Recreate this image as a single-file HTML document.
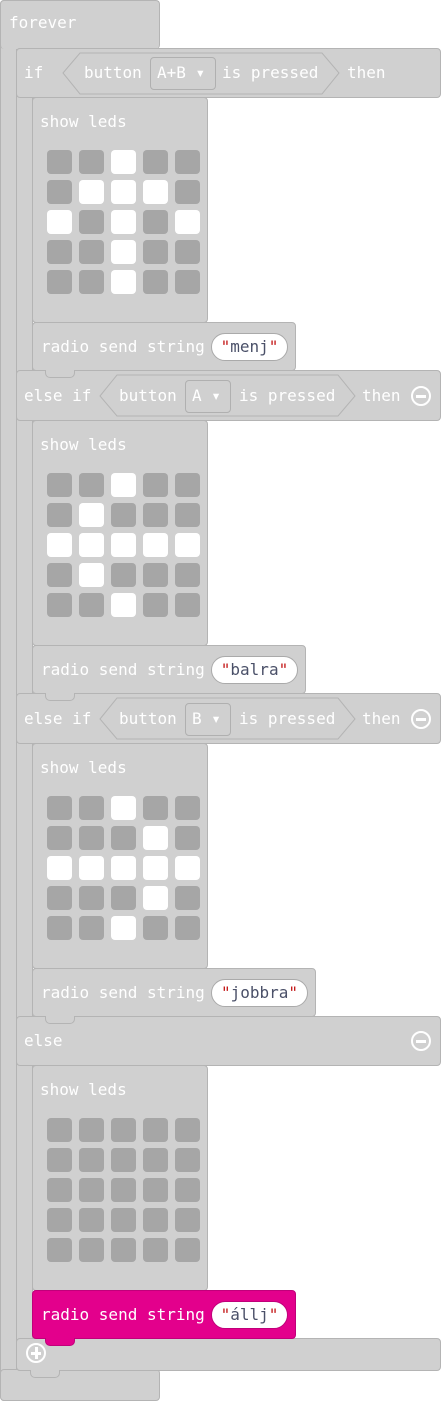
<!DOCTYPE html>
<html><head><meta charset="utf-8"><style>
*{margin:0;padding:0}
body{width:441px;height:1402px;background:#fff;position:relative;overflow:hidden;font-family:"DejaVu Sans Mono","Liberation Mono",monospace;}
.b{position:absolute;background:#d0d0d0;border:1px solid #b4b4b4;border-radius:4px;box-sizing:border-box}
.t{position:absolute;color:#fff;font-size:16px;line-height:20px;white-space:nowrap;font-weight:normal}
.tab{position:absolute;width:30px;height:8px;background:#d0d0d0;border:1px solid #b4b4b4;border-top:none;border-radius:0 0 5px 5px;box-sizing:border-box}
.g{position:absolute;left:47px;display:grid;grid-template-columns:repeat(5,25px);grid-template-rows:repeat(5,24px);column-gap:7px;row-gap:6px}
.g i{display:block;background:#a6a6a6;border-radius:4px}
.g i.w{background:#fff}
.pill{position:absolute;left:211px;height:28px;background:#fff;border:1px solid #aaa;border-radius:14px;box-sizing:border-box;color:#4a5068;font-size:16px;line-height:26px;text-align:center}
.pill b{color:#c41a1a;font-weight:normal}
.dd{position:absolute;border:1px solid #b0b0b0;border-radius:4px;box-sizing:border-box;height:33px}
.circ{position:absolute;width:20px;height:20px;border:2px solid #fff;border-radius:50%;box-sizing:border-box}
.circ:after{content:"";position:absolute;left:3px;top:6.5px;width:10px;height:3px;background:#fff}
</style></head><body>
<div class="b" style="left:0;top:0;width:17px;height:1401px"></div>
<div class="b" style="left:0;top:0;width:160px;height:49px;border-bottom:none"></div>
<div class="b" style="left:0;top:1369px;width:160px;height:32px"></div>
<div class="t" style="left:9px;top:13px">forever</div>
<div class="b" style="left:16px;top:48px;width:17px;height:1323px"></div>
<div class="b" style="left:16px;top:1338px;width:425px;height:33px"></div>
<div class="tab" style="left:30px;top:1370px"></div>
<div class="circ" style="left:26px;top:1343px"></div>
<div style="position:absolute;left:34.5px;top:1347px;width:3px;height:12px;background:#fff"></div>

<div class="b" style="left:16px;top:48px;width:425px;height:50px"></div>
<div class="b" style="left:16px;top:370px;width:425px;height:51px"></div>
<div class="b" style="left:16px;top:693px;width:425px;height:51px"></div>
<div class="b" style="left:16px;top:1016px;width:425px;height:50px"></div>

<svg style="position:absolute;left:0;top:0" width="441" height="1402">
<polygon points="63,73 80,53 322,53 339,73 322,94 80,94" fill="#d0d0d0" stroke="#b4b4b4"/>
<polygon points="100,396 117,375 338,375 355,396 338,416 117,416" fill="#d0d0d0" stroke="#b4b4b4"/>
<polygon points="100,719 117,698 338,698 355,719 338,739 117,739" fill="#d0d0d0" stroke="#b4b4b4"/>
</svg>

<div class="t" style="left:24px;top:63px">if</div>
<div class="t" style="left:84px;top:63px">button</div>
<div class="dd" style="left:150px;top:57px;width:66px"></div>
<div class="t" style="left:157px;top:63px">A+B ▾</div>
<div class="t" style="left:222px;top:63px">is pressed</div>
<div class="t" style="left:347px;top:63px">then</div>

<div class="t" style="left:24px;top:386px">else if</div>
<div class="t" style="left:119px;top:386px">button</div>
<div class="dd" style="left:185px;top:380px;width:46px"></div>
<div class="t" style="left:192px;top:386px">A ▾</div>
<div class="t" style="left:239px;top:386px">is pressed</div>
<div class="t" style="left:362px;top:386px">then</div>
<div class="circ" style="left:411px;top:386px"></div>

<div class="t" style="left:24px;top:709px">else if</div>
<div class="t" style="left:119px;top:709px">button</div>
<div class="dd" style="left:185px;top:703px;width:46px"></div>
<div class="t" style="left:192px;top:709px">B ▾</div>
<div class="t" style="left:239px;top:709px">is pressed</div>
<div class="t" style="left:362px;top:709px">then</div>
<div class="circ" style="left:411px;top:709px"></div>

<div class="t" style="left:24px;top:1031px">else</div>
<div class="circ" style="left:411px;top:1031px"></div>

<div class="b" style="left:32px;top:97px;width:176px;height:226px"></div>
<div class="t" style="left:40px;top:112px">show leds</div>
<div class="g" style="top:150px">
<i></i><i></i><i class="w"></i><i></i><i></i>
<i></i><i class="w"></i><i class="w"></i><i class="w"></i><i></i>
<i class="w"></i><i></i><i class="w"></i><i></i><i class="w"></i>
<i></i><i></i><i class="w"></i><i></i><i></i>
<i></i><i></i><i class="w"></i><i></i><i></i>
</div>
<div class="b" style="left:32px;top:322px;width:264px;height:49px"></div>
<div class="tab" style="left:45px;top:370px"></div>
<div class="t" style="left:41px;top:337px">radio send string</div>
<div class="pill" style="top:333px;width:77px"><b>"</b>menj<b>"</b></div>

<div class="b" style="left:32px;top:420px;width:176px;height:226px"></div>
<div class="t" style="left:40px;top:435px">show leds</div>
<div class="g" style="top:473px">
<i></i><i></i><i class="w"></i><i></i><i></i>
<i></i><i class="w"></i><i></i><i></i><i></i>
<i class="w"></i><i class="w"></i><i class="w"></i><i class="w"></i><i class="w"></i>
<i></i><i class="w"></i><i></i><i></i><i></i>
<i></i><i></i><i class="w"></i><i></i><i></i>
</div>
<div class="b" style="left:32px;top:645px;width:274px;height:49px"></div>
<div class="tab" style="left:45px;top:693px"></div>
<div class="t" style="left:41px;top:660px">radio send string</div>
<div class="pill" style="top:656px;width:87px"><b>"</b>balra<b>"</b></div>

<div class="b" style="left:32px;top:743px;width:176px;height:226px"></div>
<div class="t" style="left:40px;top:758px">show leds</div>
<div class="g" style="top:796px">
<i></i><i></i><i class="w"></i><i></i><i></i>
<i></i><i></i><i></i><i class="w"></i><i></i>
<i class="w"></i><i class="w"></i><i class="w"></i><i class="w"></i><i class="w"></i>
<i></i><i></i><i></i><i class="w"></i><i></i>
<i></i><i></i><i class="w"></i><i></i><i></i>
</div>
<div class="b" style="left:32px;top:968px;width:284px;height:49px"></div>
<div class="tab" style="left:45px;top:1016px"></div>
<div class="t" style="left:41px;top:983px">radio send string</div>
<div class="pill" style="top:979px;width:97px"><b>"</b>jobbra<b>"</b></div>

<div class="b" style="left:32px;top:1065px;width:176px;height:226px"></div>
<div class="t" style="left:40px;top:1080px">show leds</div>
<div class="g" style="top:1118px">
<i></i><i></i><i></i><i></i><i></i>
<i></i><i></i><i></i><i></i><i></i>
<i></i><i></i><i></i><i></i><i></i>
<i></i><i></i><i></i><i></i><i></i>
<i></i><i></i><i></i><i></i><i></i>
</div>
<div class="b" style="left:32px;top:1290px;width:264px;height:49px;background:#e3008c;border-color:#c0007a"></div>
<div class="tab" style="left:45px;top:1338px;background:#e3008c;border-color:#c0007a"></div>
<div class="t" style="left:41px;top:1305px">radio send string</div>
<div class="pill" style="top:1301px;width:77px;border-color:#c0007a"><b>"</b>állj<b>"</b></div>
</body></html>
